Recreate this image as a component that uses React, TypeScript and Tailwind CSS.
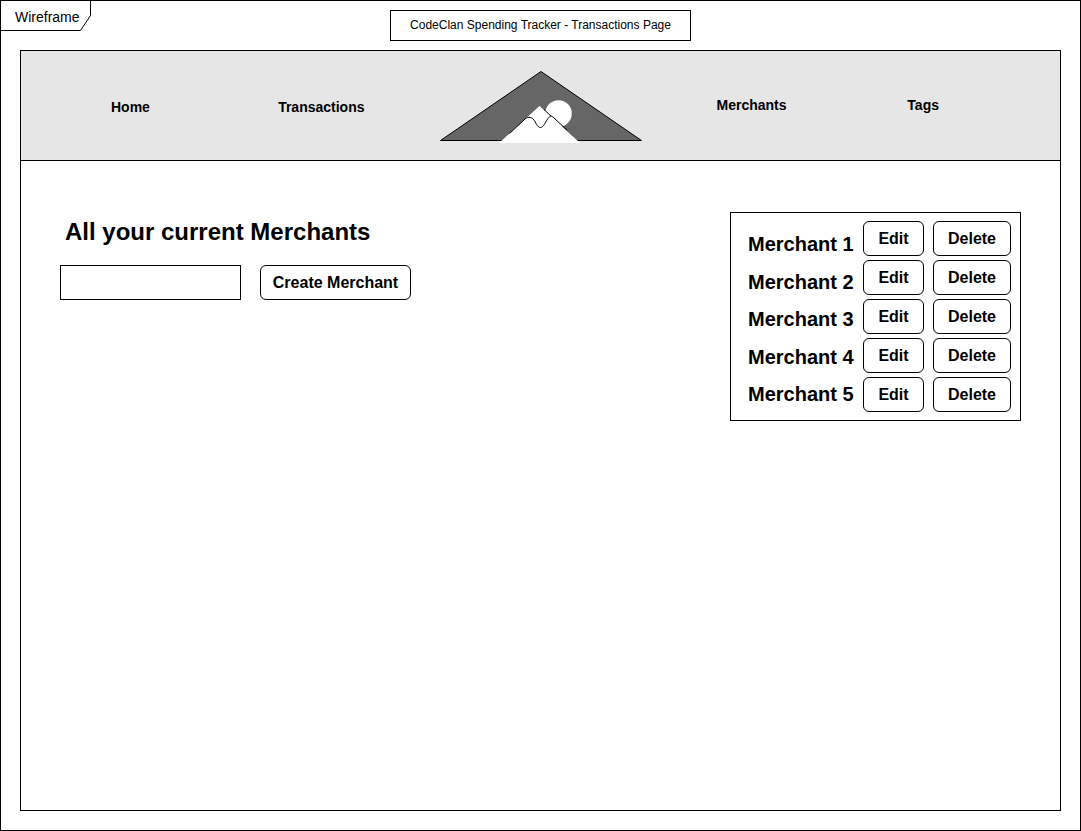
import React from "react";

const merchants = ["Merchant 1", "Merchant 2", "Merchant 3", "Merchant 4", "Merchant 5"];

const buttonClass =
  "h-[35px] rounded-md border border-black bg-white text-base font-bold leading-none";

function FrameTab() {
  return (
    <div className="relative h-[31px] w-[91px] shrink-0">
      <svg className="absolute inset-0" width="91" height="31" viewBox="0 0 91 31" fill="none" aria-hidden="true">
        <path d="M0 30.5H80.5L90.5 15.5V0" stroke="#000" />
      </svg>
      <span className="relative block pl-[15px] pt-[7px] text-sm leading-5">Wireframe</span>
    </div>
  );
}

function Logo() {
  return (
    <svg width="202" height="76" viewBox="440 69 202 76" role="img" aria-label="Mountain logo" className="shrink-0">
      <path d="M440.5 140.5L541 71.5L641.5 140.5Z" fill="#666" stroke="#000" />
      <circle cx="558.5" cy="113.5" r="13.3" fill="#fff" />
      <path d="M499 143L539.5 106L580 143Z" fill="#fff" />
      <path
        d="M509.5 133.500L524 120C527 116.500 531 116.500 533.500 119.500C536 122.500 537.500 127.500 540.300 127.500C543.500 127.500 545.500 122 548 118.500C550 115.500 551.500 115.500 554 118L567 130"
        fill="none"
        stroke="#000"
      />
      <path d="M544 109.500L551 116" stroke="#000" />
    </svg>
  );
}

function Header() {
  return (
    <header className="grid grid-cols-[1fr_auto_1fr] items-center border-b border-black bg-[#e6e6e6] pb-[15px] pt-[18px] text-sm font-bold">
      <nav aria-label="Spending" className="flex justify-between pl-[90px] pr-[75px]">
        <a href="#home">Home</a>
        <a href="#transactions">Transactions</a>
      </nav>
      <Logo />
      <nav aria-label="Categories" className="flex justify-between pb-1 pl-[75px] pr-[121px]">
        <a href="#merchants">Merchants</a>
        <a href="#tags">Tags</a>
      </nav>
    </header>
  );
}

function CreateMerchant() {
  return (
    <section>
      <h1 className="pl-[5px] pt-1 text-2xl font-bold leading-8">All your current Merchants</h1>
      <form className="mt-[17px] flex gap-[19px]" onSubmit={(e) => e.preventDefault()}>
        <input
          type="text"
          aria-label="Merchant name"
          className="h-[35px] w-[181px] border border-black bg-white px-2 text-base"
        />
        <button type="submit" className={`${buttonClass} w-[151px]`}>
          Create Merchant
        </button>
      </form>
    </section>
  );
}

function MerchantList() {
  return (
    <section aria-label="Merchants" className="flex w-[291px] justify-between border border-black py-2 pl-[17px] pr-[9px]">
      <ul className="flex flex-col justify-between pb-[3px] pt-2 text-xl font-bold">
        {merchants.map((name) => (
          <li key={name} id={name.replace(" ", "-")} className="leading-[30px]">
            {name}
          </li>
        ))}
      </ul>
      <ul className="flex flex-col gap-1">
        {merchants.map((name) => (
          <li key={name} aria-labelledby={name.replace(" ", "-")} className="flex gap-[9px]">
            <button type="button" className={`${buttonClass} w-[61px]`}>
              Edit
            </button>
            <button type="button" className={`${buttonClass} w-[78px]`}>
              Delete
            </button>
          </li>
        ))}
      </ul>
    </section>
  );
}

export default function App() {
  return (
    <div className="flex min-h-screen flex-col border border-black bg-white font-['Liberation_Sans',Arial,sans-serif] text-black">
      <div className="grid grid-cols-[1fr_auto_1fr] items-start">
        <div className="-ml-px -mt-px">
          <FrameTab />
        </div>
        <p className="mt-[9px] w-[301px] border border-black py-[5px] text-center text-xs leading-[19px]">
          CodeClan Spending Tracker - Transactions Page
        </p>
      </div>
      <div className="mx-[19px] mb-[19px] mt-[9px] flex grow flex-col border border-black">
        <Header />
        <main className="flex items-start justify-between pb-10 pl-[39px] pr-[39px] pt-[51px]">
          <CreateMerchant />
          <MerchantList />
        </main>
      </div>
    </div>
  );
}
